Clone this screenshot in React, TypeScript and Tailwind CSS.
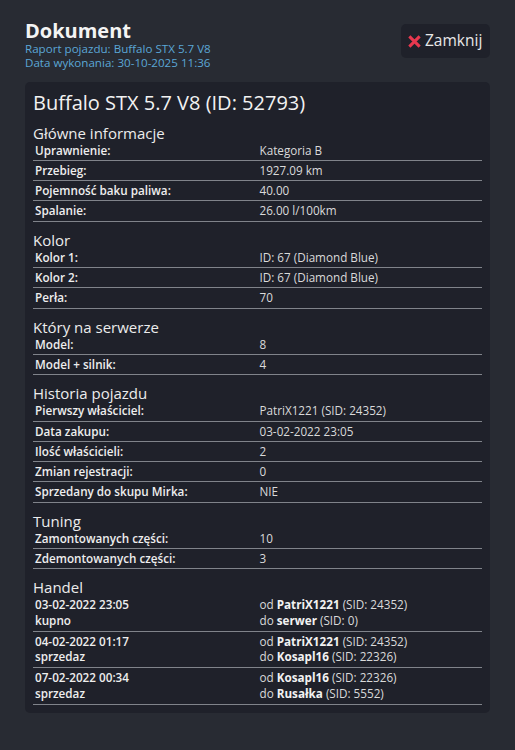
import React from "react";

type Row = [string, string];

const sections: { title: string; rows: Row[] }[] = [
  {
    title: "Główne informacje",
    rows: [
      ["Uprawnienie:", "Kategoria B"],
      ["Przebieg:", "1927.09 km"],
      ["Pojemność baku paliwa:", "40.00"],
      ["Spalanie:", "26.00 l/100km"],
    ],
  },
  {
    title: "Kolor",
    rows: [
      ["Kolor 1:", "ID: 67 (Diamond Blue)"],
      ["Kolor 2:", "ID: 67 (Diamond Blue)"],
      ["Perła:", "70"],
    ],
  },
  {
    title: "Który na serwerze",
    rows: [
      ["Model:", "8"],
      ["Model + silnik:", "4"],
    ],
  },
  {
    title: "Historia pojazdu",
    rows: [
      ["Pierwszy właściciel:", "PatriX1221 (SID: 24352)"],
      ["Data zakupu:", "03-02-2022 23:05"],
      ["Ilość właścicieli:", "2"],
      ["Zmian rejestracji:", "0"],
      ["Sprzedany do skupu Mirka:", "NIE"],
    ],
  },
  {
    title: "Tuning",
    rows: [
      ["Zamontowanych części:", "10"],
      ["Zdemontowanych części:", "3"],
    ],
  },
];

const trades = [
  { date: "03-02-2022 23:05", type: "kupno", from: "PatriX1221", fromSid: "24352", to: "serwer", toSid: "0" },
  { date: "04-02-2022 01:17", type: "sprzedaz", from: "PatriX1221", fromSid: "24352", to: "Kosapl16", toSid: "22326" },
  { date: "07-02-2022 00:34", type: "sprzedaz", from: "Kosapl16", fromSid: "22326", to: "Rusałka", toSid: "5552" },
];

function SectionTitle({ children }: { children: React.ReactNode }) {
  return <h3 className="mt-[10px] text-[15px] leading-[16px] text-[#ececec]">{children}</h3>;
}

export default function App() {
  return (
    <div className="min-h-[750px] bg-[#282b33] px-[25px] pt-[20px] font-['Open_Sans',sans-serif]">
      {/* header */}
      <div className="flex items-start justify-between">
        <div>
          <h1 className="text-[20px] font-bold leading-[22px] text-[#f4f4f4]">Dokument</h1>
          <p className="text-[11.6px] leading-[14.3px] text-[#5ba7d6]">Raport pojazdu: Buffalo STX 5.7 V8</p>
          <p className="text-[11.6px] leading-[14.3px] text-[#5ba7d6]">Data wykonania: 30-10-2025 11:36</p>
        </div>
        <button
          type="button"
          className="mt-[4px] flex h-[34px] w-[89px] items-center gap-[3px] rounded-[5px] bg-[#1f212a] pl-[6px] text-[15.5px] text-[#e8e8e8]"
        >
          <svg width="15" height="15" viewBox="0 0 16 16" aria-hidden="true">
            <path d="M2.5 2.5 L13.5 13.5 M13.5 2.5 L2.5 13.5" stroke="#e8384f" strokeWidth="3.2" />
          </svg>
          Zamknij
        </button>
      </div>

      {/* card */}
      <div className="mt-[11px] rounded-[5px] bg-[#1f212a] px-[8px] pb-[8px] pt-[8px]">
        <h2 className="text-[20px] leading-[25px] text-[#f2f2f2]">Buffalo STX 5.7 V8 (ID: 52793)</h2>

        {sections.map((s) => (
          <div key={s.title}>
            <SectionTitle>{s.title}</SectionTitle>
            {s.rows.map(([label, value]) => (
              <div
                key={label}
                className="grid grid-cols-2 border-b border-[#80838a] text-[11.7px] leading-[19.3px]"
              >
                <span className="px-[2px] font-semibold text-[#eeeeee]">{label}</span>
                <span className="px-[2px] text-[#dadada]">{value}</span>
              </div>
            ))}
          </div>
        ))}

        <SectionTitle>Handel</SectionTitle>
        {trades.map((t) => (
          <div
            key={t.date}
            className="grid grid-cols-2 border-b border-[#80838a] py-[2px] text-[11.7px] leading-[15.7px]"
          >
            <div className="px-[2px] font-semibold text-[#eeeeee]">
              <div>{t.date}</div>
              <div>{t.type}</div>
            </div>
            <div className="px-[2px] text-[#dadada]">
              <div>
                od <span className="font-bold text-[#f2f2f2]">{t.from}</span> (SID: {t.fromSid})
              </div>
              <div>
                do <span className="font-bold text-[#f2f2f2]">{t.to}</span> (SID: {t.toSid})
              </div>
            </div>
          </div>
        ))}
      </div>
    </div>
  );
}
